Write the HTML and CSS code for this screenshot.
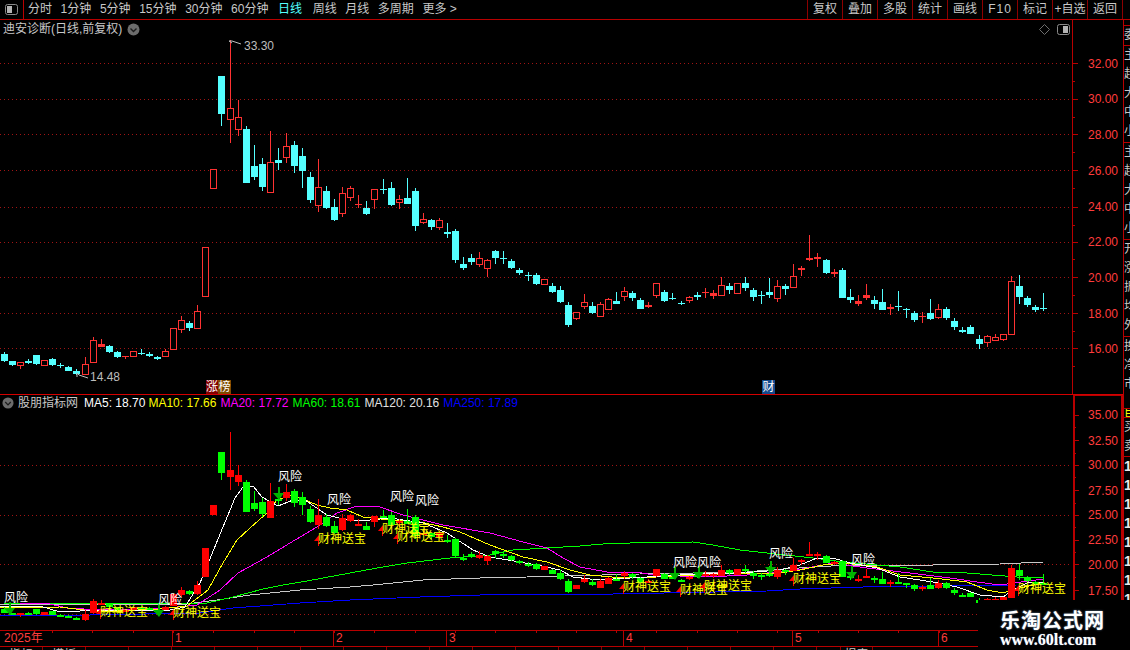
FILE: index.html
```html
<!DOCTYPE html>
<html lang="zh-CN">
  <head>
    <meta charset="UTF-8" />
    <meta name="viewport" content="width=device-width, initial-scale=1.0" />
    <title>迪安诊断 日线</title>
    <link rel="stylesheet" href="styles.css">
  </head>
  <body>
    <div class="app">
      <div class="toolbar">
        <div class="layout-btn">
          <svg width="13" height="11" viewBox="0 0 13 11">
            <rect x="0.5" y="0.5" width="12" height="10" rx="2" fill="none" stroke="#8a8a8a" />
            <rect x="2" y="2" width="5" height="7" fill="#b4b4b4" />
          </svg>
        </div>
        <div class="tabs">
          <span>分时</span>
          <span>1分钟</span>
          <span>5分钟</span>
          <span>15分钟</span>
          <span>30分钟</span>
          <span>60分钟</span>
          <span class="active">日线</span>
          <span>周线</span>
          <span>月线</span>
          <span>多周期</span>
          <span>更多 &gt;</span>
        </div>
        <div class="tool-btns">
          <span>复权</span>
          <span>叠加</span>
          <span>多股</span>
          <span>统计</span>
          <span>画线</span>
          <span class="f10">F10</span>
          <span>标记</span>
          <span>+自选</span>
          <span class="last">返回</span>
        </div>
      </div>

      <div class="content">
        <div class="charts">
          <div class="pane pane-main">
            <div class="pane-head">
              <span class="stock-name">迪安诊断(日线,前复权)</span>
              <svg class="chevron" width="13" height="13" viewBox="0 0 13 13">
                <circle cx="6.5" cy="6.5" r="6" fill="#6c6c6c" />
                <polyline points="3.5,5.5 6.5,8.5 9.5,5.5" fill="none" stroke="#1c1c1c" stroke-width="1.4" />
              </svg>
            </div>
            <div class="pane-tools">
              <svg width="11" height="11" viewBox="0 0 11 11">
                <polygon points="5.5,0.5 10.5,5.5 5.5,10.5 0.5,5.5" fill="none" stroke="#6e6e6e" />
              </svg>
              <svg width="13" height="11" viewBox="0 0 13 11">
                <rect x="0.5" y="0.5" width="12" height="10" rx="2" fill="none" stroke="#8a8a8a" />
                <rect x="6" y="2" width="5" height="7" fill="#b4b4b4" />
              </svg>
            </div>
            <svg id="mainChart" class="chart" width="1123" height="374" viewBox="0 20 1123 374"></svg>
          </div>

          <div class="pane pane-sub">
            <div class="pane-head sub-head">
              <svg class="chevron" width="12" height="12" viewBox="0 0 13 13">
                <circle cx="6.5" cy="6.5" r="6" fill="#6c6c6c" />
                <polyline points="3.5,5.5 6.5,8.5 9.5,5.5" fill="none" stroke="#1c1c1c" stroke-width="1.4" />
              </svg>
              <span class="stock-name">股朋指标网</span>
              <span class="ma ma5">MA5: 18.70</span>
              <span class="ma ma10">MA10: 17.66</span>
              <span class="ma ma20">MA20: 17.72</span>
              <span class="ma ma60">MA60: 18.61</span>
              <span class="ma ma120">MA120: 20.16</span>
              <span class="ma ma250">MA250: 17.89</span>
            </div>
            <svg id="subChart" class="chart" width="1123" height="235" viewBox="0 395 1123 235"></svg>
          </div>

          <div class="timebar" id="timebar"></div>

          <div class="bottom-tabs">
            <span>指标</span>
            <span>模板</span>
            <span></span>
            <span></span>
            <span></span>
            <span></span>
            <span></span>
            <span></span>
            <span></span>
            <span></span>
            <span></span>
            <span></span>
            <span></span>
            <span></span>
            <span></span>
            <span></span>
            <span></span>
            <span></span>
            <span></span>
            <span class="short"></span>
            <span class="report">报表</span>
          </div>
        </div>

        <div class="side">
          <div class="side-group g1"></div>
          <div class="side-group g2"><p>委比</p></div>
          <div class="side-group g3"><p>主力</p><p>超大</p><p>大单</p><p>中单</p><p>小单</p></div>
          <div class="side-group g3"><p>主力</p><p>超大</p><p>大单</p><p>中单</p><p>小单</p></div>
          <div class="side-group g3"><p>开盘</p><p>涨幅</p><p>振幅</p><p>均价</p><p>外盘</p></div>
          <div class="side-group g4"><p>换手</p><p>净资</p><p>市盈</p></div>
          <div class="side-group g5"><p>目</p></div>
          <div class="side-group g6"><p>买</p><p>卖</p></div>
          <div class="side-rows"><p>1</p><p>1</p><p>1</p><p>1</p><p>1</p><p>1</p><p>1</p><p>1</p></div>
        </div>
      </div>

      <div class="watermark">
        <div class="wm-title">乐淘公式网</div>
        <div class="wm-url">www.60lt.com</div>
      </div>
    </div>

    <script src="chart.js"></script>
  </body>
</html>
```

FILE: styles.css
```css
html,
body {
  margin: 0;
  background: #000;
}
body {
  font-family: "Liberation Sans", "Noto Sans CJK SC", sans-serif;
  font-size: 12px;
  color: #c8c8c8;
}
.app {
  position: relative;
  width: 1130px;
  height: 650px;
  overflow: hidden;
  display: flex;
  flex-direction: column;
  background: #000;
}

.toolbar {
  height: 20px;
  box-sizing: border-box;
  display: flex;
  border-bottom: 1px solid #b80000;
  line-height: 19px;
}
.layout-btn {
  width: 24px;
  box-sizing: border-box;
  border-right: 1px solid #b80000;
  display: flex;
  align-items: center;
  justify-content: center;
  padding-right: 1px;
}
.tabs {
  display: flex;
  gap: 8.6px;
  padding-left: 4px;
  white-space: nowrap;
}
.tabs .active {
  color: #54ffff;
  margin-left: 1px;
  margin-right: 2px;
}
.tool-btns {
  margin-left: auto;
  display: flex;
  margin-right: 7px;
}
.tool-btns span {
  width: 35px;
  box-sizing: border-box;
  border-left: 1px solid #8c0000;
  text-align: center;
  white-space: nowrap;
}
.tool-btns .f10 {
  letter-spacing: 1px;
}
.tool-btns .last {
  width: 36px;
  border-right: 1px solid #8c0000;
}

.content {
  flex: 1;
  display: flex;
  min-height: 0;
}
.charts {
  width: 1123px;
  display: flex;
  flex-direction: column;
}
.pane {
  position: relative;
}
.pane-main {
  height: 375px;
  box-sizing: border-box;
  border-bottom: 1px solid #d40000;
}
.pane-sub {
  height: 235px;
}
.chart {
  display: block;
}
.pane-head {
  position: absolute;
  left: 3px;
  top: 0;
  height: 18px;
  display: flex;
  align-items: center;
  gap: 5px;
  line-height: 18px;
}
.stock-name {
  white-space: nowrap;
}
.sub-head {
  left: 2px;
  top: -1px;
  gap: 4px;
}
.sub-head .stock-name {
  margin-right: 2px;
  margin-left: 0;
}
.pane-tools {
  position: absolute;
  top: 4px;
  left: 1039px;
  display: flex;
  gap: 7px;
}
.ma {
  white-space: nowrap;
}
.ma5 { color: #fff; margin-right: -1px; }
.ma10 { color: #ffff00; }
.ma20 { color: #ff00ff; }
.ma60 { color: #00ff00; }
.ma120 { color: #e0e0e0; }
.ma250 { color: #0000ff; }

.timebar {
  position: relative;
  height: 17px;
  box-sizing: border-box;
  border-top: 1px solid #b80000;
  border-bottom: 1px solid #b80000;
}
.month {
  position: absolute;
  top: 0;
  height: 15px;
  border-left: 1px solid #b80000;
  padding-left: 2px;
  color: #ff3c3c;
  line-height: 15px;
  white-space: nowrap;
}
.month.first {
  border-left: 0;
}
.time-tick {
  position: absolute;
  top: 0;
  width: 1px;
  height: 2px;
  background: #b80000;
}
.bottom-tabs {
  flex: 1;
  display: flex;
  overflow: hidden;
}
.bottom-tabs span {
  width: 43px;
  flex: none;
  box-sizing: border-box;
  border-right: 1px solid #8c0000;
  text-align: center;
  line-height: 16px;
  white-space: nowrap;
  overflow: hidden;
}
.bottom-tabs .short {
  width: 24px;
}
.bottom-tabs .report {
  width: 32px;
}

.side {
  width: 7px;
  box-sizing: border-box;
  border-left: 1px solid #b80000;
  overflow: hidden;
}
.side p {
  margin: 0;
  height: 19px;
  line-height: 19px;
  white-space: nowrap;
}
.side-group {
  box-sizing: border-box;
  border-bottom: 1px solid #b80000;
  overflow: hidden;
}
.g1 { height: 6px; }
.g2 { height: 20px; }
.g3 { height: 97px; }
.g4 { height: 72px; }
.g5 { height: 9px; color: #ffff00; }
.g5 p { height: 8px; line-height: 8px; }
.g6 { height: 39px; }
.side-rows p {
  font-weight: bold;
  font-size: 14px;
  color: #e8e8e8;
}

.axis-price {
  fill: #ff3c3c;
  font-size: 12px;
  dominant-baseline: central;
}
.flag-text {
  fill: #bdbdbd;
  font-size: 12px;
  dominant-baseline: central;
}
.mark {
  fill: #fff;
  font-size: 12px;
  dominant-baseline: central;
  text-anchor: middle;
}
.risk {
  fill: #fff;
  font-size: 12px;
  dominant-baseline: central;
}
.gift {
  fill: #ffff00;
  font-size: 12px;
  dominant-baseline: central;
}

.watermark {
  position: absolute;
  left: 978px;
  top: 600px;
  width: 152px;
  height: 50px;
  background: #000;
  color: #fff;
  text-align: center;
}
.wm-title {
  margin-top: 8px;
  margin-left: -3px;
  font-family: "Noto Sans CJK SC", sans-serif;
  font-size: 20px;
  font-weight: 700;
  line-height: 24px;
  letter-spacing: 1px;
  text-shadow: 0 0 2px #6f8fb0;
}
.wm-url {
  margin-left: -12px;
  font-family: "Liberation Serif", serif;
  font-size: 16px;
  font-weight: 700;
  line-height: 16px;
  text-shadow: 0 0 1px #6f8fb0;
}
```

FILE: chart.js
```js
const NS = "http://www.w3.org/2000/svg";

// [up, high, top, bottom, low] in page pixels of the main pane
const candles = [
  [0, 351.7, 354, 361, 361.7], [0, 361, 361, 365, 366], [1, 362, 362.3, 365.7, 369], [0, 359.3, 361, 363, 364],
  [0, 355, 355, 364, 364.7], [1, 360, 360.3, 365.7, 365.7], [0, 358, 359, 364.7, 365.7], [0, 363.3, 365, 365.7, 367.7],
  [0, 366, 367, 370.7, 371], [0, 369, 370.7, 373.7, 374.7], [1, 357.3, 364.3, 374.7, 375.3], [1, 337, 340.3, 362.7, 363.3],
  [1, 339.3, 344.3, 346.7, 346.7], [0, 345.3, 346, 352, 352.7], [0, 351, 352, 357, 357.7], [1, 356.3, 356.3, 357.3, 358.7],
  [1, 351.3, 351.3, 357.3, 357.3], [0, 349, 353, 353.7, 355], [0, 352, 353.7, 356, 357], [0, 356, 357, 358.7, 359.7],
  [1, 348.7, 351.3, 357.3, 357.3], [1, 328.3, 328.3, 350.3, 350.3], [1, 316, 320.3, 330.3, 332.7], [0, 321.3, 323.3, 327.7, 330.7],
  [1, 305, 311.3, 328.7, 329.3], [1, 247, 247, 297.3, 297.3], [1, 169.3, 169.3, 188.7, 188.7], [0, 76, 76, 113.7, 126],
  [1, 40, 108.3, 119.7, 142.7], [1, 100, 117.3, 129.7, 136], [0, 126, 129, 183, 183], [0, 145, 166, 177, 180],
  [0, 158, 164, 187, 191], [1, 131, 162.3, 192.7, 192.7], [0, 148, 160, 163, 170], [1, 133, 146.3, 157.7, 163],
  [0, 141, 145, 166, 173], [0, 148, 156, 171, 188], [0, 172, 177, 200, 203], [1, 159, 187.3, 205.7, 212],
  [0, 186, 191, 208, 209], [0, 199, 207, 220, 221], [1, 187, 193.3, 213.7, 217], [1, 186, 188.3, 197.7, 201],
  [1, 195, 204, 205, 208], [0, 201, 208, 214, 215], [1, 189.3, 189.3, 199.7, 209], [0, 179, 189, 190, 194],
  [0, 182, 188, 205, 206], [1, 195, 199.3, 202.7, 209], [0, 178, 198, 204, 204], [0, 188, 191, 226, 231],
  [1, 213, 219.3, 222.7, 223.7], [0, 219, 220, 227, 230], [1, 218, 220.3, 227.7, 229.7], [0, 223, 232, 233.7, 238],
  [0, 229, 231, 260, 263], [0, 257, 264, 268, 270], [0, 254, 258, 262, 265], [1, 252, 258.3, 264.7, 266.7],
  [1, 259, 260.3, 268.7, 277], [0, 250, 251, 258, 264], [0, 251, 258, 259, 264], [0, 259, 261, 268, 269],
  [0, 268, 270, 273, 275], [0, 272, 274.7, 275.7, 281], [0, 273, 275, 284, 285], [1, 279.3, 279.3, 284.7, 284.7],
  [0, 283, 286, 292, 293], [0, 286, 290, 302, 303], [0, 302, 305, 325, 327], [1, 312.3, 312.3, 318.7, 320],
  [1, 294, 302.3, 306.7, 309], [0, 302, 306, 313, 314], [1, 302, 304.3, 316.7, 316.7], [1, 298, 299.3, 309.7, 309.7],
  [0, 292, 301, 304, 304], [1, 287, 291.3, 296.7, 301], [0, 291, 293, 298, 301], [0, 298, 300, 309, 309],
  [1, 302, 305, 307, 308], [1, 283.3, 283.3, 295.7, 298], [0, 290, 292, 301, 302], [0, 293, 298, 299, 300],
  [0, 301, 302.7, 303.7, 305], [1, 296, 297.3, 300.7, 303], [0, 292, 295, 297, 300], [1, 288, 292, 293, 298],
  [1, 290, 293.3, 295.7, 299], [1, 277, 285.3, 295.7, 295.7], [0, 283, 286, 290, 294], [1, 283.3, 283.3, 293.7, 293.7],
  [0, 277, 283, 288, 291], [0, 288, 290, 297, 301], [0, 291, 295, 296, 304], [0, 278, 292, 295, 298],
  [1, 280, 286.3, 298.7, 302], [0, 284, 286, 289, 295], [1, 264, 276.3, 287.7, 287.7], [1, 266, 268, 269.7, 276],
  [1, 235, 258, 260, 261], [1, 253, 257, 259, 267], [0, 259, 260, 273, 274], [1, 269, 272, 274.3, 277],
  [0, 268, 270, 298, 298], [0, 289, 297, 300, 303], [1, 295, 301.3, 303.7, 306], [1, 284, 295.3, 297.7, 300],
  [0, 296, 300, 304, 309], [0, 289, 302, 310, 310], [1, 304, 307, 309, 315], [0, 291, 306, 307, 311],
  [0, 308, 309.3, 310.3, 318], [0, 311, 313, 320, 322], [1, 312, 316, 317, 323], [0, 299, 313, 319, 320],
  [1, 304, 309.3, 317.7, 319], [0, 307, 309, 318, 320], [0, 318, 321, 327, 330], [0, 327, 330, 332, 333],
  [0, 325, 327, 334, 334], [0, 335, 339, 344, 349], [1, 335, 336.3, 342.7, 347], [1, 334, 337.3, 340.7, 340.7],
  [1, 334.3, 334.3, 339.7, 341], [1, 276, 281.3, 334.7, 334.7], [0, 275, 286, 297, 304], [0, 296, 298, 305, 307],
  [0, 305, 307, 310, 312], [0, 293, 308, 309, 311],
];

const mainGrid = [63, 98.7, 134.4, 170.1, 206.8, 241.5, 277.2, 313, 348];
const mainLabels = ["32.00", "30.00", "28.00", "26.00", "24.00", "22.00", "20.00", "18.00", "16.00"];
const subTicks = [414.5, 440, 464.5, 490, 514.5, 539.5, 564, 590];
const subLabels = ["35.00", "32.50", "30.00", "27.50", "25.00", "22.50", "20.00", "17.50"];
const subGrid = [464.5, 514.5, 564, 613.5];

const lines = [
  { color: "#0000ff", pts: [[0, 615], [90, 615], [200, 613], [233, 608], [300, 603], [350, 600], [420, 597], [480, 595], [500, 594], [613, 594], [767, 591], [800, 589], [863, 587], [933, 586], [1017, 585]] },
  { color: "#c8c8c8", pts: [[0, 604], [187, 604], [217, 600], [250, 595], [300, 590], [350, 587], [373, 585], [423, 580], [480, 578], [527, 577], [640, 574], [747, 572], [767, 570], [847, 565], [933, 565], [1000, 564], [1043, 562]] },
  { color: "#00ff00", pts: [[4, 603], [207, 603], [233, 597], [263, 589], [283, 585], [307, 581], [350, 573], [377, 568], [407, 563], [450, 558], [490, 555], [513, 550], [547, 548], [580, 546], [603, 544], [630, 543], [693, 542], [713, 545], [740, 550], [767, 553], [813, 558], [843, 562], [900, 567], [933, 572], [967, 573], [1017, 577], [1043, 577]] },
  { color: "#ff00ff", pts: [[20, 603], [50, 604], [67, 608], [100, 610], [167, 608], [197, 605], [220, 590], [238, 573], [267, 557], [290, 543], [317, 527], [337, 513], [357, 506], [377, 506], [403, 515], [443, 525], [490, 533], [523, 542], [547, 548], [563, 558], [580, 567], [607, 572], [637, 572], [653, 575], [707, 577], [747, 575], [797, 570], [833, 563], [867, 568], [910, 573], [950, 578], [977, 582], [1000, 585], [1043, 579]] },
  { color: "#ffff00", pts: [[0, 608], [60, 607], [100, 612], [150, 610], [187, 606], [208, 590], [223, 563], [237, 540], [250, 528], [267, 513], [277, 500], [293, 495], [317, 505], [330, 508], [347, 510], [363, 517], [390, 520], [420, 522], [443, 527], [460, 532], [490, 545], [523, 557], [547, 562], [570, 570], [590, 575], [623, 578], [657, 577], [697, 575], [740, 573], [780, 573], [800, 570], [823, 565], [843, 563], [877, 567], [900, 575], [933, 578], [967, 582], [987, 590], [1003, 593], [1020, 588], [1043, 583]] },
  { color: "#ffffff", pts: [[0, 606], [40, 606], [60, 612], [100, 610], [150, 611], [170, 610], [185, 607], [200, 583], [223, 527], [235, 498], [243, 487], [253, 486], [262, 497], [278, 506], [293, 500], [305, 500], [327, 515], [347, 520], [370, 520], [390, 518], [423, 523], [447, 533], [473, 550], [490, 557], [537, 565], [560, 570], [573, 577], [590, 579], [613, 579], [647, 577], [680, 575], [713, 573], [740, 573], [780, 570], [800, 565], [817, 558], [833, 558], [850, 563], [877, 568], [900, 577], [933, 582], [957, 587], [980, 595], [1003, 597], [1013, 590], [1027, 583], [1043, 582]] },
];

const risks = [[4, 598], [158, 600], [278, 477], [327, 500], [390, 497], [415, 501], [673, 563], [697, 563], [769, 554], [851, 560]];
const riskArrows = [[9, 613], [158, 615], [278, 498], [674, 578], [698, 577], [770, 572], [851, 577]];
const gifts = [[100, 612], [173, 613], [318, 539], [382, 529], [397, 537], [623, 587], [680, 590], [704, 586], [793, 579], [1018, 589]];

function el(parent, name, attrs, text) {
  const node = document.createElementNS(NS, name);
  for (const key in attrs) node.setAttribute(key, attrs[key]);
  if (text) node.textContent = text;
  parent.appendChild(node);
  return node;
}

function rect(svg, x, y, w, h, fill) {
  el(svg, "rect", { x, y, width: w, height: h, fill, "shape-rendering": "crispEdges" });
}

function candleX(i) {
  return Math.round(4 + 8.054 * i);
}

function dotted(svg, y) {
  el(svg, "line", {
    x1: 0, x2: 1072, y1: Math.round(y) + 0.5, y2: Math.round(y) + 0.5,
    stroke: "#a01414", "stroke-dasharray": "1 3", "shape-rendering": "crispEdges",
  });
}

function drawMain(svg) {
  const red = "#ff3232";
  const cyan = "#54ffff";
  mainGrid.forEach((y) => dotted(svg, y));

  candles.forEach((c, i) => {
    const x = candleX(i);
    const hi = Math.round(c[1]);
    const top = Math.round(c[2]);
    const bot = Math.round(c[3]);
    const lo = Math.round(c[4]);
    const color = c[0] ? red : cyan;
    if (hi < top) rect(svg, x, hi, 1, top - hi, color);
    if (lo > bot) rect(svg, x, bot, 1, lo - bot, color);
    if (c[0] && bot - top > 3) {
      el(svg, "rect", {
        x: x - 2.5, y: top + 0.5, width: 6, height: bot - top - 1,
        fill: "#000", stroke: color, "shape-rendering": "crispEdges",
      });
    } else {
      rect(svg, x - 3, top, 7, Math.max(bot - top, 1), color);
    }
  });

  // axis
  rect(svg, 1072, 20, 1, 374, "#b80000");
  mainGrid.forEach((y, i) => {
    rect(svg, 1072, Math.round(y), 6, 1, "#b80000");
    rect(svg, 1072, Math.round(y + 17.8), 3, 1, "#b80000");
    el(svg, "text", { class: "axis-price", x: 1088, y: y + 0.5 }, mainLabels[i]);
  });

  // high and low flags
  el(svg, "polyline", { points: "241,44 232,41 229,41 232,43", fill: "none", stroke: "#bdbdbd" });
  el(svg, "text", { class: "flag-text", x: 244, y: 46 }, "33.30");
  el(svg, "polyline", { points: "88,378 79,375 77,373 77,377", fill: "none", stroke: "#bdbdbd" });
  el(svg, "text", { class: "flag-text", x: 90, y: 377 }, "14.48");

  // event marks sitting on the pane bottom
  rect(svg, 206, 380, 12, 14, "#820000");
  rect(svg, 218, 380, 13, 14, "#7e4a00");
  el(svg, "text", { class: "mark", x: 212, y: 387 }, "涨");
  el(svg, "text", { class: "mark", x: 224.5, y: 387 }, "榜");
  rect(svg, 762, 380, 13, 14, "#144a8c");
  el(svg, "text", { class: "mark", x: 768.5, y: 387 }, "财");
}

function subY(y) {
  return 444.6 + (y - 63) * 0.5635;
}

function drawSub(svg) {
  const red = "#ff0000";
  const green = "#00ff00";
  subGrid.forEach((y) => dotted(svg, y));

  lines.forEach((line) => {
    el(svg, "polyline", {
      points: line.pts.map((p) => p.join(",")).join(" "),
      fill: "none", stroke: line.color, "shape-rendering": "crispEdges",
    });
  });

  candles.forEach((c, i) => {
    const x = candleX(i);
    const hi = Math.round(subY(c[1]));
    const top = Math.round(subY(c[2]));
    const bot = Math.round(subY(c[3]));
    const lo = Math.round(subY(c[4]));
    const color = c[0] ? red : green;
    rect(svg, x, hi, 1, Math.max(lo - hi, 1), color);
    rect(svg, x - 3, top, 7, Math.max(bot - top, 2), color);
  });

  riskArrows.forEach((a) => {
    const x = a[0];
    const y = a[1];
    rect(svg, x, y - 11, 2, 7, "#00b400");
    el(svg, "polygon", { points: `${x - 5},${y - 5} ${x + 6},${y - 5} ${x + 1},${y + 2}`, fill: "#00b400" });
  });

  gifts.forEach((g) => {
    const x = g[0];
    const y = g[1];
    rect(svg, x, y, 1, 7, "#ff0000");
    el(svg, "polygon", { points: `${x - 4},${y + 2} ${x + 1},${y - 4} ${x + 1},${y + 2}`, fill: "#ff0000" });
    el(svg, "text", { class: "gift", x, y }, "财神送宝");
  });
  risks.forEach((r) => el(svg, "text", { class: "risk", x: r[0], y: r[1] }, "风险"));

  // axis box
  rect(svg, 1073, 395, 2, 235, "#b80000");
  rect(svg, 1121, 395, 2, 235, "#b80000");
  rect(svg, 1073, 395, 50, 1, "#b80000");
  subTicks.forEach((y, i) => {
    rect(svg, 1073, Math.round(y), 6, 1, "#b80000");
    rect(svg, 1073, Math.round(y + 12.5), 3, 1, "#b80000");
    el(svg, "text", { class: "axis-price", x: 1088, y: y + 0.5 }, subLabels[i]);
  });
}

function drawTimebar(bar) {
  for (let x = 52; x < 978; x += 40.3) {
    const tick = document.createElement("div");
    tick.className = "time-tick";
    tick.style.left = Math.round(x) + "px";
    bar.appendChild(tick);
  }
  const months = [[2, "2025年"], [172, "1"], [333, "2"], [446, "3"], [623, "4"], [792, "5"], [938, "6"]];
  months.forEach((m, i) => {
    const label = document.createElement("div");
    label.className = i === 0 ? "month first" : "month";
    label.style.left = m[0] + "px";
    label.textContent = m[1];
    bar.appendChild(label);
  });
}

drawMain(document.getElementById("mainChart"));
drawSub(document.getElementById("subChart"));
drawTimebar(document.getElementById("timebar"));
```
